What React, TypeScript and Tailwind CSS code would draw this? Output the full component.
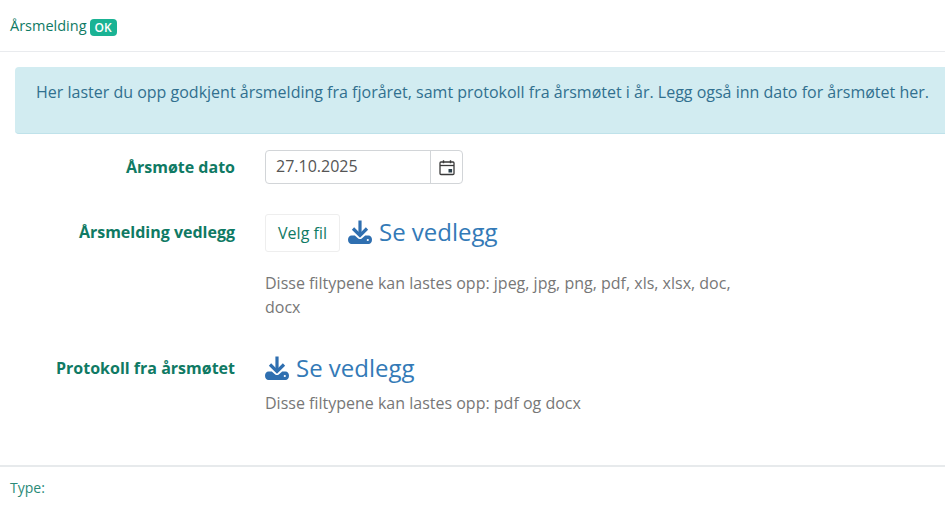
import React from "react";

function DownloadIcon() {
  return (
    <svg viewBox="0 0 24 24" className="w-[24px] h-[24px] shrink-0" aria-hidden="true">
      <path d="M12 0.5v14" stroke="#2f6fb0" strokeWidth="3.2" fill="none" />
      <path d="M5 8.5 12 15.5 19 8.5" stroke="#2f6fb0" strokeWidth="3.2" fill="none" />
      <path d="M3.5 15.5h3.3L10.2 18.4c1 .9 2.6 .9 3.6 0l3.4-2.9h3.3c2 0 3.5 1.8 3.5 4.2S22.500 24 20.500 24h-17C1.500 24 0 22.100 0 19.700s1.500-4.200 3.500-4.200z" fill="#2f6fb0" />
      <circle cx="19.8" cy="20" r="1.1" fill="#ffffff" />
    </svg>
  );
}

function CalendarIcon() {
  return (
    <svg viewBox="0 0 16 16" className="w-[16px] h-[17px]" fill="none" aria-hidden="true">
      <rect x="1" y="2.5" width="14" height="12.5" rx="1" stroke="#3a3a3a" strokeWidth="1.3" />
      <path d="M1 6h14" stroke="#3a3a3a" strokeWidth="1.3" />
      <path d="M4.5 0.8v3M11.5 0.8v3" stroke="#3a3a3a" strokeWidth="1.4" />
      <rect x="9.5" y="9.5" width="3.6" height="3.500" fill="#2b3f4a" />
    </svg>
  );
}

function SeeAttachment() {
  return (
    <a className="flex items-center gap-[7px] text-[#337ab7] text-[24px] leading-[32px]">
      <DownloadIcon />
      <span>Se vedlegg</span>
    </a>
  );
}

export default function App() {
  return (
    <div className="w-[945px] h-[506px] bg-white overflow-hidden flex flex-col font-['Open_Sans',sans-serif]">
      <div className="h-[52px] shrink-0 border-b border-[#e9ebee] pl-[10px] pt-[16px] flex items-start gap-[3px]">
        <span className="text-[14.5px] leading-[20px] text-[#0f7a64]">Årsmelding</span>
        <span className="mt-[3px] h-[17px] w-[27px] rounded-[4px] bg-[#1ab394] text-white text-[12px] font-semibold leading-[17px] text-center">OK</span>
      </div>

      <div className="mt-[15px] ml-[15px] h-[67px] shrink-0 bg-[#d2ecf1] border-b border-[#bfe2ea] rounded-l-[4px] pl-[21px] pt-[14px] text-[#31708f] text-[16px] leading-[22px] whitespace-nowrap">
        Her laster du opp godkjent årsmelding fra fjoråret, samt protokoll fra årsmøtet i år. Legg også inn dato for årsmøtet her.
      </div>

      <div className="grid grid-cols-[235px_480px] gap-x-[30px] mt-[16px]">
        <div className="h-[34px] flex items-center justify-end text-[16px] font-bold text-[#0f7a64]">Årsmøte dato</div>
        <div className="flex">
          <div className="w-[198px] h-[34px] border border-[#d2d5d8] rounded-[4px] flex">
            <div className="flex-1 pl-[10px] text-[16px] leading-[30px] text-[#555]">27.10.2025</div>
            <div className="w-[32px] border-l border-[#d2d5d8] flex items-center justify-center">
              <CalendarIcon />
            </div>
          </div>
        </div>

        <div className="mt-[30px] h-[38px] flex items-center justify-end text-[16px] leading-[34px] pb-[2px] font-bold text-[#0f7a64]">Årsmelding vedlegg</div>
        <div className="mt-[30px] flex items-center gap-[8px]">
          <div className="w-[75px] h-[38px] border border-[#eeeeee] rounded-[3px] flex items-center justify-center text-[16px] text-[#0f7a64]">Velg fil</div>
          <div className="-mt-[3px]"><SeeAttachment /></div>
        </div>

        <div />
        <div className="mt-[19px] w-[480px] text-[16px] leading-[24px] text-[#777]">
          Disse filtypene kan lastes opp: jpeg, jpg, png, pdf, xls, xlsx, doc, docx
        </div>

        <div className="mt-[33px] h-[32px] flex items-center justify-end text-[16px] font-bold text-[#0f7a64]">Protokoll fra årsmøtet</div>
        <div className="mt-[33px]">
          <SeeAttachment />
          <div className="mt-[7px] text-[16px] leading-[24px] text-[#777]">Disse filtypene kan lastes opp: pdf og docx</div>
        </div>
      </div>

      <div className="mt-auto h-[41px] shrink-0 border-t-2 border-[#e7eaec] pl-[10px] pt-[11px] text-[14px] leading-[20px] text-[#2a8a78]">Type:</div>
    </div>
  );
}
